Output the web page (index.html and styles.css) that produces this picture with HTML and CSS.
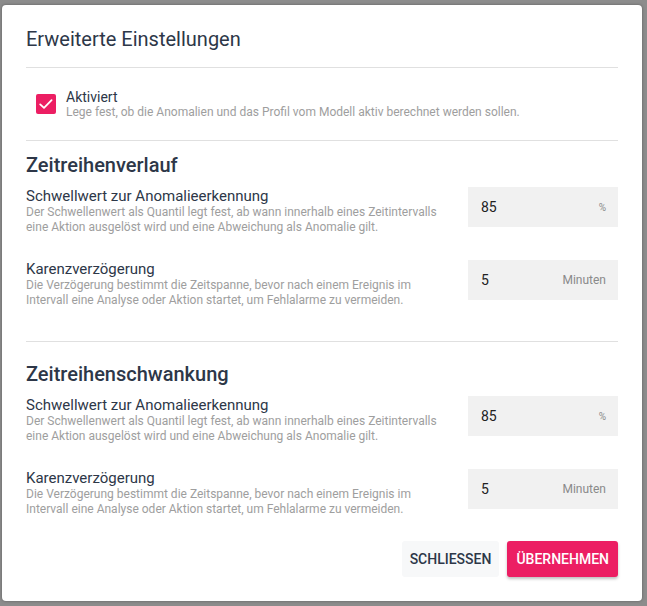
FILE: index.html
```html
<!DOCTYPE html>
<html lang="de">
<head>
<meta charset="utf-8">
<title>Erweiterte Einstellungen</title>
<link rel="stylesheet" href="styles.css">
</head>
<body>
<div class="backdrop">
  <div class="dialog">
    <h1 class="title">Erweiterte Einstellungen</h1>
    <div class="divider"></div>
    <div class="check-row">
      <span class="checkbox">
        <svg width="20" height="20" viewBox="0 0 20 20"><path d="M4.2 10.4 L8 13.9 L15.6 6.2" fill="none" stroke="#fff" stroke-width="1.8" stroke-linecap="round" stroke-linejoin="round"/></svg>
      </span>
      <div class="check-text">
        <div class="check-label">Aktiviert</div>
        <div class="desc">Lege fest, ob die Anomalien und das Profil vom Modell aktiv berechnet werden sollen.</div>
      </div>
    </div>
    <div class="divider"></div>

    <section class="section section-first">
      <h2 class="section-title">Zeitreihenverlauf</h2>
      <div class="field">
        <div class="field-text">
          <div class="field-label">Schwellwert zur Anomalieerkennung</div>
          <div class="desc">Der Schwellenwert als Quantil legt fest, ab wann innerhalb eines Zeitintervalls eine Aktion ausgelöst wird und eine Abweichung als Anomalie gilt.</div>
        </div>
        <div class="input"><span class="value">85</span><span class="unit unit-small">%</span></div>
      </div>
      <div class="field">
        <div class="field-text">
          <div class="field-label">Karenzverzögerung</div>
          <div class="desc">Die Verzögerung bestimmt die Zeitspanne, bevor nach einem Ereignis im Intervall eine Analyse oder Aktion startet, um Fehlalarme zu vermeiden.</div>
        </div>
        <div class="input"><span class="value">5</span><span class="unit">Minuten</span></div>
      </div>
    </section>

    <div class="divider"></div>

    <section class="section section-second">
      <h2 class="section-title">Zeitreihenschwankung</h2>
      <div class="field">
        <div class="field-text">
          <div class="field-label">Schwellwert zur Anomalieerkennung</div>
          <div class="desc">Der Schwellenwert als Quantil legt fest, ab wann innerhalb eines Zeitintervalls eine Aktion ausgelöst wird und eine Abweichung als Anomalie gilt.</div>
        </div>
        <div class="input"><span class="value">85</span><span class="unit unit-small">%</span></div>
      </div>
      <div class="field">
        <div class="field-text">
          <div class="field-label">Karenzverzögerung</div>
          <div class="desc">Die Verzögerung bestimmt die Zeitspanne, bevor nach einem Ereignis im Intervall eine Analyse oder Aktion startet, um Fehlalarme zu vermeiden.</div>
        </div>
        <div class="input"><span class="value">5</span><span class="unit">Minuten</span></div>
      </div>
    </section>

    <div class="actions">
      <button class="btn btn-flat">SCHLIESSEN</button>
      <button class="btn btn-primary">ÜBERNEHMEN</button>
    </div>
  </div>
</div>
</body>
</html>
```
FILE: styles.css
```css
* { box-sizing: border-box; }
html, body { margin: 0; padding: 0; }
body {
  width: 647px;
  height: 606px;
  background: #8c8c8c;
  font-family: Roboto, "Liberation Sans", sans-serif;
  color: #2d3748;
  overflow: hidden;
}
.backdrop {
  padding: 5px 5px 5px 2px;
  height: 606px;
}
.dialog {
  background: #fff;
  border-radius: 4px;
  height: 596px;
  padding: 0 24px 0 24px;
  display: flex;
  flex-direction: column;
  box-shadow: 0 0 3px rgba(0,0,0,0.35);
}
.dialog > * { flex-shrink: 0; }
.title {
  margin: 0;
  padding: 22px 0 0 0;
  height: 62px;
  font-size: 20px;
  font-weight: 400;
  line-height: 24px;
  color: #2d3748;
}
.divider {
  height: 1px;
  background: #e0e0e0;
}
.check-row {
  display: flex;
  align-items: flex-start;
  padding: 21px 0 20px 10px;
  gap: 10px;
}
.checkbox {
  width: 20px;
  height: 20px;
  margin-top: 5px;
  border-radius: 2px;
  background: #ec1e63;
  display: flex;
  align-items: center;
  justify-content: center;
}
.check-label {
  font-size: 14px;
  line-height: 16px;
  color: #2d3748;
}
.desc {
  font-size: 12px;
  line-height: 15px;
  color: #9e9e9e;
}
.section-first { padding-bottom: 33px; }
.section-second { padding-bottom: 0; }
.section-title {
  margin: 0;
  font-size: 20px;
  font-weight: 500;
  line-height: 24px;
  padding: 12px 0 10px;
  color: #2d3748;
}
.section-second .section-title { padding-top: 20px; }
.field {
  display: flex;
  justify-content: space-between;
  align-items: flex-start;
}
.field + .field { margin-top: 25px; }
.field-text { width: 420px; }
.field-label {
  font-size: 15px;
  line-height: 18px;
  color: #2d3748;
}
.input {
  width: 150px;
  height: 40px;
  background: #f1f1f1;
  display: flex;
  align-items: center;
  justify-content: space-between;
  padding: 0 12px 0 13px;
}
.value { font-size: 14px; color: #222; }
.unit { font-size: 12px; color: #8a8a8a; }
.unit-small { font-size: 10px; }
.actions {
  display: flex;
  justify-content: flex-end;
  gap: 8px;
  margin-top: auto;
  padding-bottom: 24px;
}
.btn {
  height: 36px;
  border: none;
  border-radius: 3px;
  font-family: Roboto, "Liberation Sans", sans-serif;
  font-size: 14px;
  font-weight: 500;
  padding: 0 8px;
}
.btn-flat { background: #f7f8f9; color: #2d3748; }
.btn-primary {
  background: #ec1e63;
  color: #fff;
  padding: 0 9px;
  box-shadow: 0 2px 3px rgba(0,0,0,0.25);
}
```
